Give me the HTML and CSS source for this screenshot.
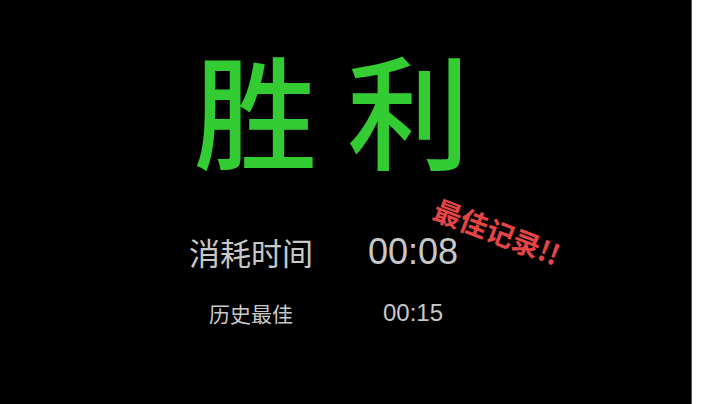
FILE: index.html
```html
<!DOCTYPE html>
<html lang="zh">
<head>
<meta charset="utf-8">
<link rel="stylesheet" href="styles.css">
</head>
<body>
<div class="screen">
  <div class="content">
    <h1 class="title">胜利</h1>
    <div class="stats">
      <div class="label big">消耗时间</div>
      <div class="value big">00:08</div>
      <div class="label small">历史最佳</div>
      <div class="value small">00:15</div>
      <div class="stamp">最佳记录!!</div>
    </div>
  </div>
</div>
</body>
</html>
```
FILE: styles.css
```css
html, body {
  margin: 0;
  padding: 0;
  background: #ffffff;
}
.screen {
  width: 692px;
  height: 404px;
  background: #000000;
  border-right: 1px solid #555;
  box-sizing: border-box;
}
.content {
  width: 664px;
  display: flex;
  flex-direction: column;
  align-items: center;
}
.title {
  margin: 46px 0 0 0;
  padding-left: 30px;
  font-family: "Noto Sans CJK SC", sans-serif;
  font-weight: 500;
  font-size: 123px;
  line-height: 120px;
  letter-spacing: 30px;
  color: #33cc33;
}
.stats {
  position: relative;
  margin-top: 55px;
  display: grid;
  grid-template-columns: 162px 162px;
  grid-template-rows: 61px 61px;
  align-items: center;
  justify-items: center;
  color: #c8c8c8;
}
.label {
  font-family: "Noto Sans CJK SC", sans-serif;
}
.value {
  font-family: "Liberation Sans", Arial, sans-serif;
}
.label.big { font-size: 31px; }
.value.big { font-size: 36px; }
.label.small { font-size: 21px; }
.value.small { font-size: 24px; }
.stamp {
  position: absolute;
  left: 261px;
  top: -10px;
  font-family: "Noto Sans CJK SC", sans-serif;
  font-weight: 700;
  font-size: 28px;
  color: #e54545;
  white-space: nowrap;
  transform: rotate(21deg);
  transform-origin: center;
}
```
